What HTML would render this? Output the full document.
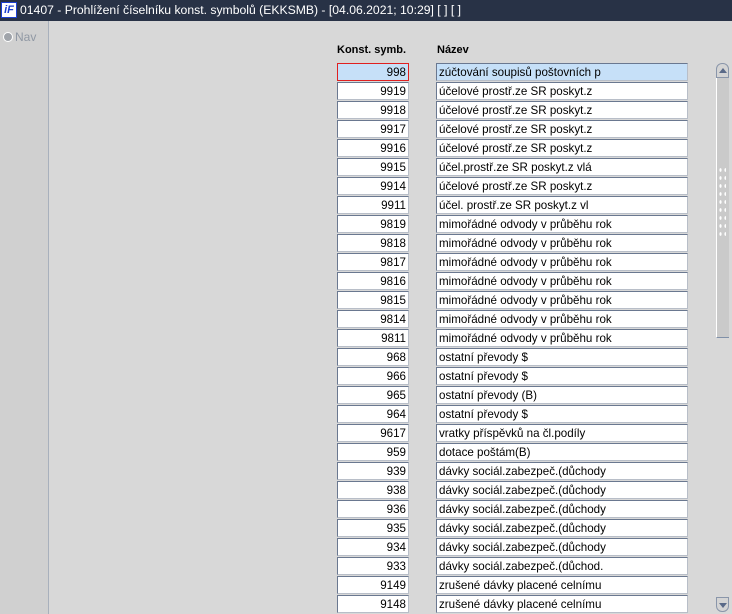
<!DOCTYPE html>
<html><head><meta charset="utf-8"><style>
*{margin:0;padding:0;box-sizing:border-box}
body{width:732px;height:614px;overflow:hidden;background:#d8d8d8;font-family:"Liberation Sans",sans-serif;font-size:12px;position:relative}
.title{position:absolute;left:0;top:0;width:732px;height:21px;background:#283246;color:#fff;font-size:12.2px;line-height:21px;padding-left:20px;white-space:nowrap}
.logo{position:absolute;left:1px;top:2px;width:16px;height:16px;background:#fff;border:1px solid #1b3fd0;color:#1b3fd0;font-weight:bold;font-style:italic;font-size:11px;line-height:14px;text-align:center}
.left{position:absolute;left:0;top:21px;width:49px;height:593px;background:#d0d0d0;border-right:1px solid #a8b0bc}
.nav{position:absolute;left:3px;top:30px;color:#9098a4;font-size:12px}
.nav i{display:inline-block;width:10px;height:10px;border-radius:50%;background:#a0a4aa;border:1px solid #fff;vertical-align:-1px;margin-right:2px}
.h{position:absolute;top:44px;font-weight:bold;font-size:11px}
.c,.n{position:absolute;height:18px;background:#fff;border:1px solid #b8bec8;border-top-color:#6a7890;border-left-color:#6a7890;line-height:18px;font-size:11.6px;white-space:nowrap;overflow:hidden}
.c{left:337px;width:72px;text-align:right;padding-right:2px}
.n{left:436px;width:252px;padding-left:2px}
.sel{background:#c6e0f8}
.c.sel{border:1px solid #e02020}
</style></head><body>
<div class="title"><div class="logo">iF</div>01407 - Prohlížení číselníku konst. symbolů (EKKSMB) - [04.06.2021; 10:29] [ ] [ ]</div>
<div class="left"></div>
<div class="nav"><i></i>Nav</div>
<div class="h" style="left:337px">Konst. symb.</div>
<div class="h" style="left:437px">Název</div>
<div id="rows"></div>
<div style="position:absolute;left:716px;top:63px;width:13px;height:15px;border:1px solid #8a96aa;border-radius:6px 6px 0 0;background:#d4d4d4"><div style="position:absolute;left:2px;top:4px;border-left:4px solid transparent;border-right:4px solid transparent;border-bottom:5px solid #5a6a88"></div></div>
<div style="position:absolute;left:716px;top:78px;width:13px;height:260px;background:#cacaca;border-left:1px solid #fff;border-bottom:1px solid #8090a8"></div>
<div style="position:absolute;left:718px;top:166px;width:8px;height:70px;background-image:radial-gradient(#fff 1px,transparent 1.3px);background-size:5px 8px"></div>
<div style="position:absolute;left:716px;top:597px;width:13px;height:15px;border:1px solid #8a96aa;border-radius:0 0 6px 6px;background:#d4d4d4"><div style="position:absolute;left:2px;top:5px;border-left:4px solid transparent;border-right:4px solid transparent;border-top:5px solid #5a6a88"></div></div>
<script>
var d=[["998","zúčtování soupisů poštovních p"],["9919","účelové prostř.ze SR poskyt.z"],["9918","účelové prostř.ze SR poskyt.z"],["9917","účelové prostř.ze SR poskyt.z"],["9916","účelové prostř.ze SR poskyt.z"],["9915","účel.prostř.ze SR poskyt.z vlá"],["9914","účelové prostř.ze SR poskyt.z"],["9911","účel. prostř.ze SR poskyt.z vl"],["9819","mimořádné odvody v průběhu rok"],["9818","mimořádné odvody v průběhu rok"],["9817","mimořádné odvody v průběhu rok"],["9816","mimořádné odvody v průběhu rok"],["9815","mimořádné odvody v průběhu rok"],["9814","mimořádné odvody v průběhu rok"],["9811","mimořádné odvody v průběhu rok"],["968","ostatní převody $"],["966","ostatní převody $"],["965","ostatní převody (B)"],["964","ostatní převody $"],["9617","vratky příspěvků na čl.podíly"],["959","dotace poštám(B)"],["939","dávky sociál.zabezpeč.(důchody"],["938","dávky sociál.zabezpeč.(důchody"],["936","dávky sociál.zabezpeč.(důchody"],["935","dávky sociál.zabezpeč.(důchody"],["934","dávky sociál.zabezpeč.(důchody"],["933","dávky sociál.zabezpeč.(důchod."],["9149","zrušené dávky placené celnímu"],["9148","zrušené dávky placené celnímu"]];
var h="";d.forEach(function(r,i){var t=63+i*19,s=i==0?" sel":"";h+='<div class="c'+s+'" style="top:'+t+'px">'+r[0]+'</div><div class="n'+s+'" style="top:'+t+'px">'+r[1]+'</div>';});
document.getElementById("rows").innerHTML=h;
</script>
</body></html>
